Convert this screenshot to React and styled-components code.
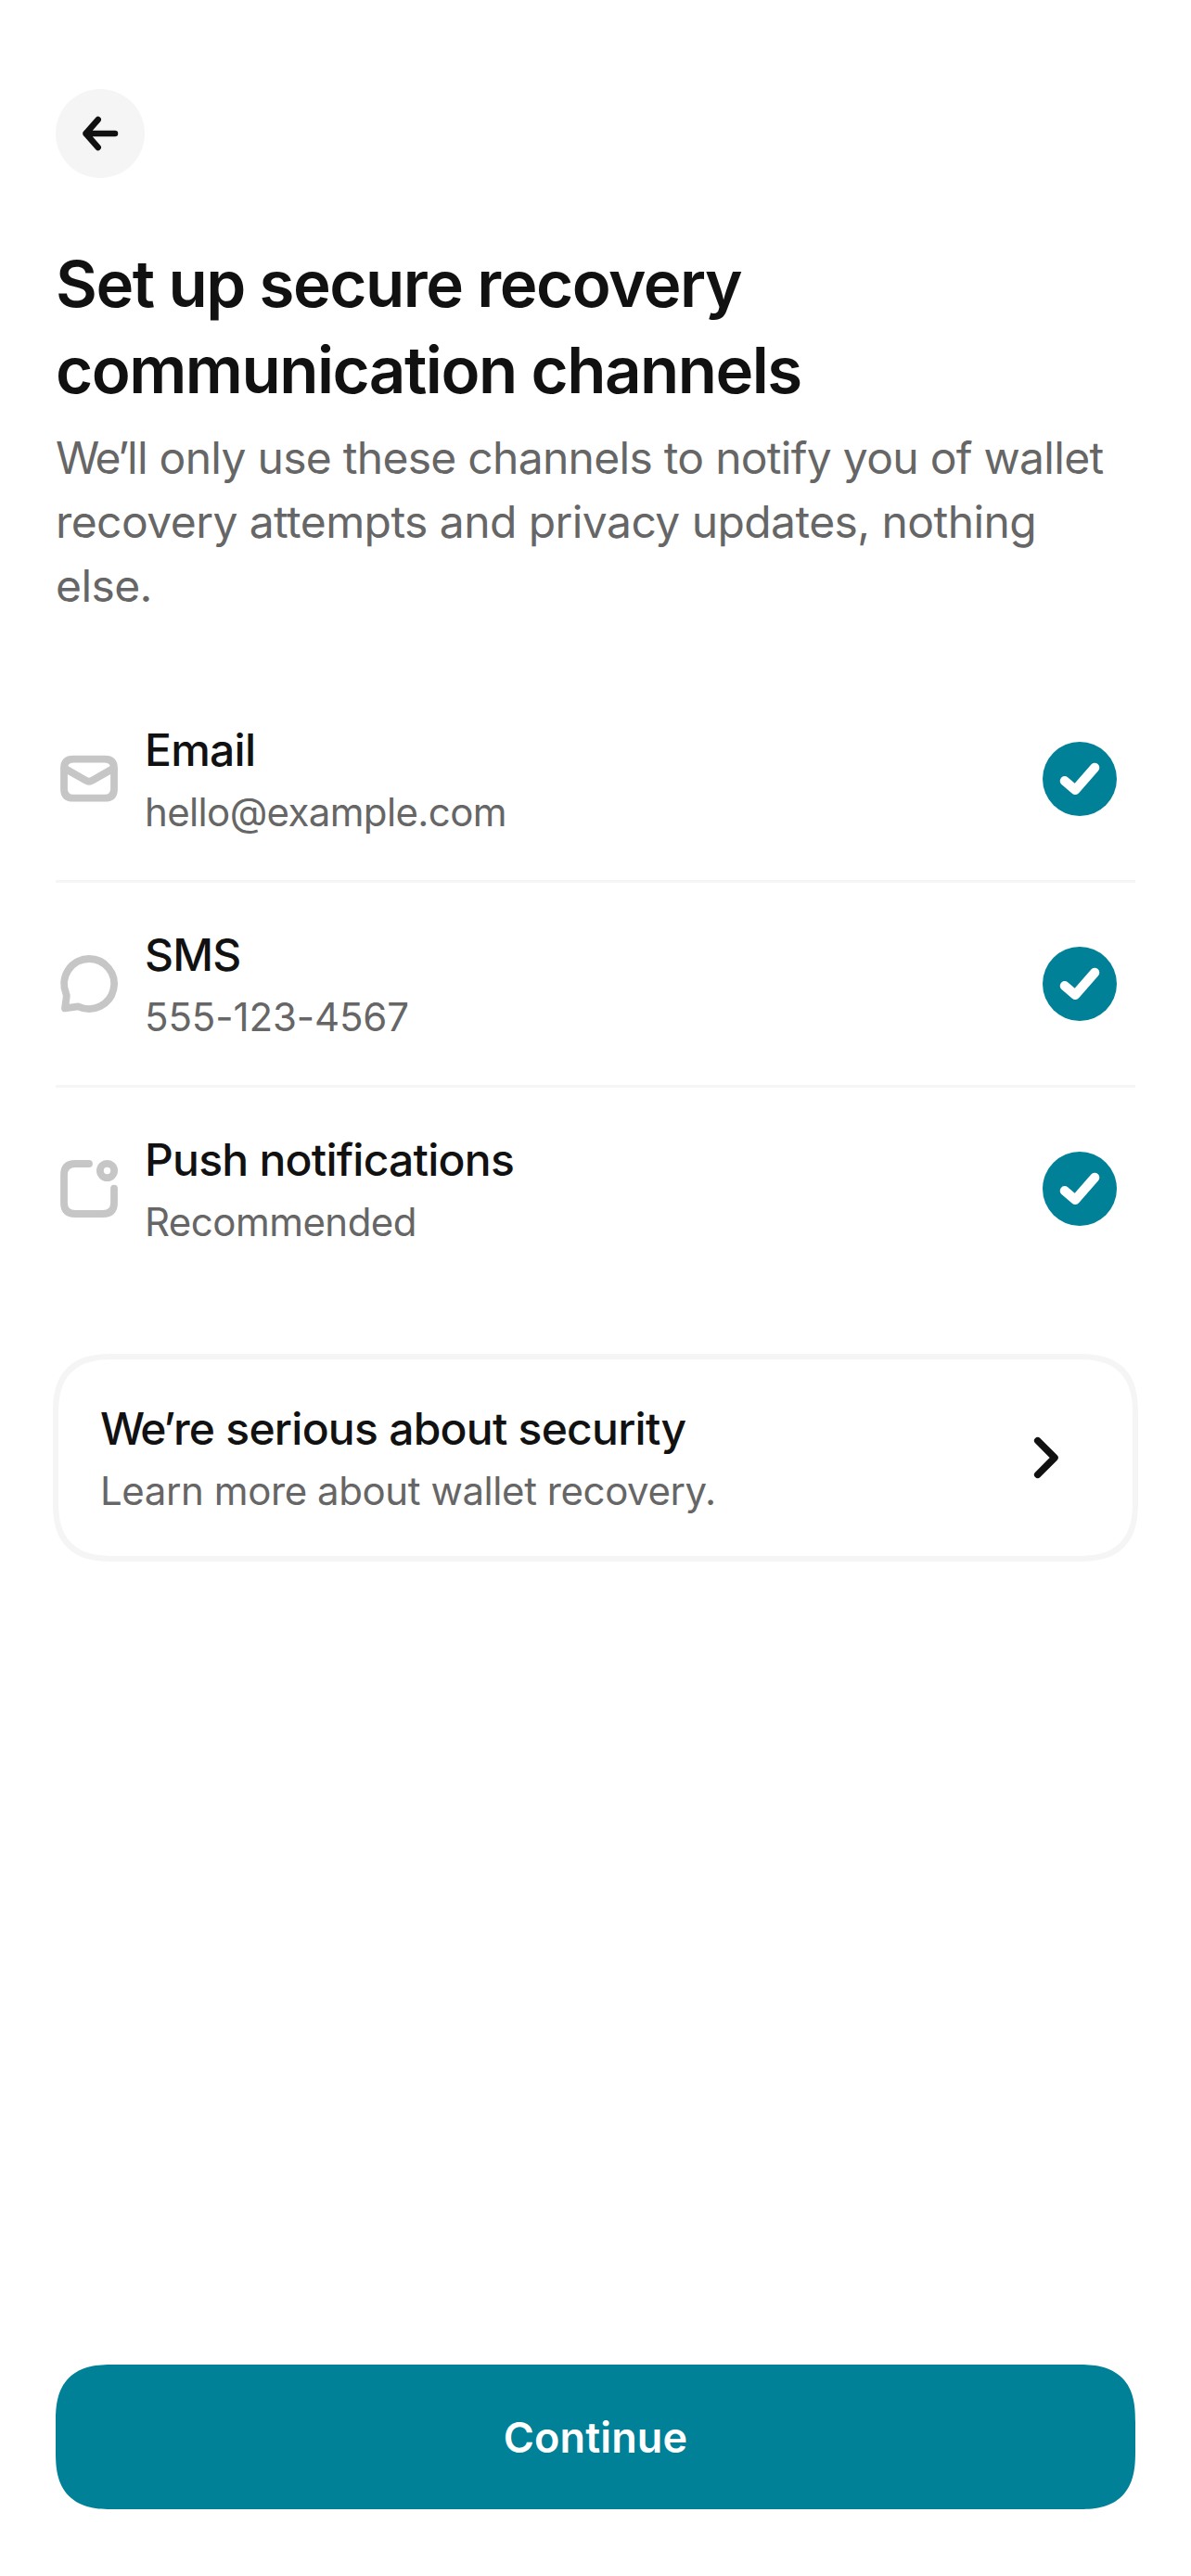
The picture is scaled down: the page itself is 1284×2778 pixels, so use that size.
import React from "react";
import styled, { createGlobalStyle } from "styled-components";

const GlobalStyle = createGlobalStyle`
  * { box-sizing: border-box; }
  body { margin: 0; background: #fff; }
`;

const Screen = styled.main`
  display: flex;
  flex-direction: column;
  width: 1284px;
  height: 2778px;
  padding: 96px 60px 72px;
  font-family: Inter, "Liberation Sans", sans-serif;
  color: #111;
`;

const BackButton = styled.button`
  display: grid;
  place-items: center;
  width: 96px;
  height: 96px;
  padding: 0;
  border: 0;
  border-radius: 50%;
  background: #f5f5f5;
`;

const Title = styled.h1`
  margin: 68px 0 0;
  font-size: 69px;
  font-weight: 600;
  line-height: 93px;
  letter-spacing: -1.5px;
`;

const Lead = styled.p`
  margin: 13px 0 0;
  font-size: 48px;
  line-height: 69px;
  color: #666;
`;

const Line = styled.span`
  display: block;
  white-space: nowrap;
  letter-spacing: ${(p) => p.$track}px;
`;

const Tight = styled.span`
  letter-spacing: -2.4px;
`;

const ChannelList = styled.ul`
  display: flex;
  flex-direction: column;
  margin: 65px 0 0;
  padding: 0;
  list-style: none;
`;

const Channel = styled.li`
  display: flex;
  align-items: center;
  gap: 24px;
  height: 221px;
  padding-right: 20px;
  border-bottom: 3px solid ${(p) => (p.$last ? "transparent" : "#f5f5f5")};
`;

const Labels = styled.div`
  display: flex;
  flex: 1;
  flex-direction: column;
  gap: 3px;
`;

const Name = styled.div`
  font-size: 48px;
  font-weight: 500;
  line-height: 69px;
  letter-spacing: -0.75px;
`;

const Detail = styled.div`
  font-size: 42px;
  line-height: 60px;
  letter-spacing: ${(p) => p.$track}px;
  color: #666;
`;

const CheckBadge = styled.span`
  display: grid;
  place-items: center;
  width: 80px;
  height: 80px;
  border-radius: 50%;
  background: #008197;
`;

const Card = styled.section`
  display: flex;
  align-items: center;
  height: 224px;
  margin: 66px -3px 0;
  padding: 0 45px;
  border: 6px solid #f5f5f5;
  border-radius: 66px;
  corner-shape: superellipse(1.4);
`;

const ContinueButton = styled.button`
  width: 100%;
  height: 156px;
  margin-top: auto;
  border: 0;
  border-radius: 62px;
  corner-shape: superellipse(1.4);
  background: #008197;
  color: #fff;
  font-family: inherit;
  font-size: 45px;
  font-weight: 600;
  letter-spacing: 0.15px;
`;

const Icon = styled.svg`
  flex: none;
  display: block;
  fill: none;
  stroke: ${(p) => p.$color};
  stroke-width: ${(p) => p.$weight};
  stroke-linecap: round;
  stroke-linejoin: round;
`;

const glyphs = {
  mail: (
    <>
      <path d="M19 14.700 H53 Q63 14.700 63 24.700 V46.700 Q63 56.700 53 56.700 H19 Q9 56.700 9 46.700 V24.700 Q9 14.700 19 14.700 Z" />
      <path d="M9.500 24.500 L32.500 37.700 Q36 39.800 39.500 37.700 L62.500 24.500" />
    </>
  ),
  chat: (
    <path d="M36 9 A27 27 0 1 1 24.500 60.400 L10 62.400 L11.700 50 Q12 48 11.200 46.400 A27 27 0 0 1 36 9 Z" />
  ),
  push: (
    <>
      <path d="M36 9 H21 Q9 9 9 21 V51 Q9 63 21 63 H51 Q63 63 63 51 V35.700" />
      <circle cx="55.500" cy="16.500" r="7.600" />
    </>
  ),
};

const channels = [
  { glyph: "mail", name: "Email", detail: "hello@example.com", track: -0.64 },
  { glyph: "chat", name: "SMS", detail: "555-123-4567", track: -0.12 },
  { glyph: "push", name: "Push notifications", detail: "Recommended", track: -0.54 },
];

export default function App() {
  return (
    <>
      <GlobalStyle />
      <Screen>
        <BackButton aria-label="Back">
          <Icon width="96" height="96" $color="#111" $weight={6.5}>
            <path d="M64 48 H32.500 M45.700 33 L32.500 48 L45.700 63" />
          </Icon>
        </BackButton>
        <Title>Set up secure recovery communication channels</Title>
        <Lead>
          <Line $track={-0.72}>
            <Tight>We’</Tight>ll only use these channels to notify you of wallet
          </Line>
          <Line $track={-0.57}>recovery attempts and privacy updates, nothing</Line>
          <Line $track={-0.6}>else.</Line>
        </Lead>
        <ChannelList>
          {channels.map((c, i) => (
            <Channel key={c.name} $last={i === channels.length - 1}>
              <Icon width="72" height="72" $color="#c6c6c6" $weight={7.8}>
                {glyphs[c.glyph]}
              </Icon>
              <Labels>
                <Name>{c.name}</Name>
                <Detail $track={c.track}>{c.detail}</Detail>
              </Labels>
              <CheckBadge>
                <Icon width="80" height="80" $color="#fff" $weight={10.2}>
                  <path d="M23.800 42.200 L35.200 51.900 L56.200 27.800" />
                </Icon>
              </CheckBadge>
            </Channel>
          ))}
        </ChannelList>
        <Card>
          <Labels>
            <Name>
              <Tight>We’</Tight>re serious about security
            </Name>
            <Detail $track={-0.42}>Learn more about wallet recovery.</Detail>
          </Labels>
          <Icon width="96" height="72" $color="#111" $weight={7.5}>
            <path d="M38.700 17.700 L57 36 L38.700 54.300" />
          </Icon>
        </Card>
        <ContinueButton>Continue</ContinueButton>
      </Screen>
    </>
  );
}
